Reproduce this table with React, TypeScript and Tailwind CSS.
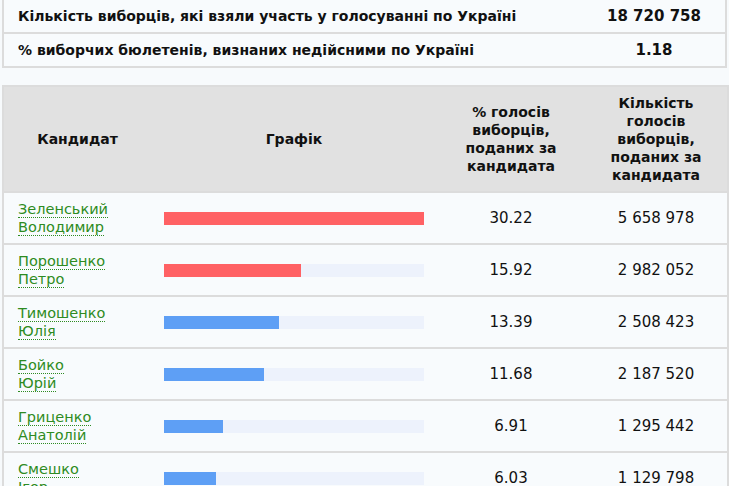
import React from "react";

const rows = [
  { n1: "Зеленський", n2: "Володимир", pct: 30.22, cnt: "5 658 978", red: true },
  { n1: "Порошенко", n2: "Петро", pct: 15.92, cnt: "2 982 052", red: true },
  { n1: "Тимошенко", n2: "Юлія", pct: 13.39, cnt: "2 508 423", red: false },
  { n1: "Бойко", n2: "Юрій", pct: 11.68, cnt: "2 187 520", red: false },
  { n1: "Гриценко", n2: "Анатолій", pct: 6.91, cnt: "1 295 442", red: false },
  { n1: "Смешко", n2: "Ігор", pct: 6.03, cnt: "1 129 798", red: false },
];

const font = { fontFamily: "Tahoma, 'DejaVu Sans', Verdana, sans-serif" };

export default function App() {
  return (
    <div className="bg-[#f7fafc] w-[729px] h-[486px] overflow-hidden" style={font}>
      <div className="pl-[2px] pr-[2px]">
        <table className="w-[725px] border-collapse bg-[#f8fbfd] text-[#111]">
          <tbody>
            <tr className="h-[33px]">
              <td className="border-2 border-t-0 border-r-0 border-[#dcdcdc] pl-[14px] text-[14px] font-bold">
                Кількість виборців, які взяли участь у голосуванні по Україні
              </td>
              <td className="border-2 border-t-0 border-l-0 border-[#dcdcdc] w-[143px] text-center text-[15px] font-bold">
                18 720 758
              </td>
            </tr>
            <tr className="h-[34px]">
              <td className="border-2 border-[#dcdcdc] border-r-0 pl-[14px] text-[14px] font-bold">
                % виборчих бюлетенів, визнаних недійсними по Україні
              </td>
              <td className="border-2 border-l-0 border-[#dcdcdc] text-center text-[15px] font-bold">1.18</td>
            </tr>
          </tbody>
        </table>
        <div className="h-[17px]" />
        <table className="w-[725px] border-collapse bg-[#f8fbfd] text-[#111] table-fixed">
          <colgroup>
            <col className="w-[148px]" />
            <col className="w-[286px]" />
            <col className="w-[148px]" />
            <col className="w-[143px]" />
          </colgroup>
          <thead>
            <tr className="bg-[#e1e1e1] h-[106px] text-[14px] font-bold leading-[18px]">
              <th className="border-2 border-[#dcdcdc] border-r-0">Кандидат</th>
              <th className="border-y-2 border-[#dcdcdc]">Графік</th>
              <th className="border-y-2 border-[#dcdcdc] px-[20px]">
                % голосів виборців, поданих за кандидата
              </th>
              <th className="border-2 border-l-0 border-[#dcdcdc] px-[22px]">
                Кількість голосів виборців, поданих за кандидата
              </th>
            </tr>
          </thead>
          <tbody>
            {rows.map((r) => (
              <tr key={r.n1} className="h-[52px]">
                <td className="border-2 border-t-0 border-r-0 border-[#dcdcdc] pl-[14px] text-[14.5px] leading-[18px] text-[#2e8b22]">
                  <span className="border-b border-dotted border-[#2e8b22]">{r.n1}</span>
                  <br />
                  <span className="border-b border-dotted border-[#2e8b22]">{r.n2}</span>
                </td>
                <td className="border-b-2 border-[#dcdcdc] pl-[13px]">
                  <div className="w-[260px] h-[13px] bg-[#edf2fc]">
                    <div
                      className={r.red ? "h-full bg-[#ff6164]" : "h-full bg-[#5e9ff5]"}
                      style={{ width: `${Math.round((r.pct / 30.22) * 260)}px` }}
                    />
                  </div>
                </td>
                <td className="border-b-2 border-[#dcdcdc] text-center text-[15px]">{r.pct.toFixed(2)}</td>
                <td className="border-2 border-t-0 border-l-0 border-[#dcdcdc] text-center text-[15px]">{r.cnt}</td>
              </tr>
            ))}
          </tbody>
        </table>
      </div>
    </div>
  );
}
